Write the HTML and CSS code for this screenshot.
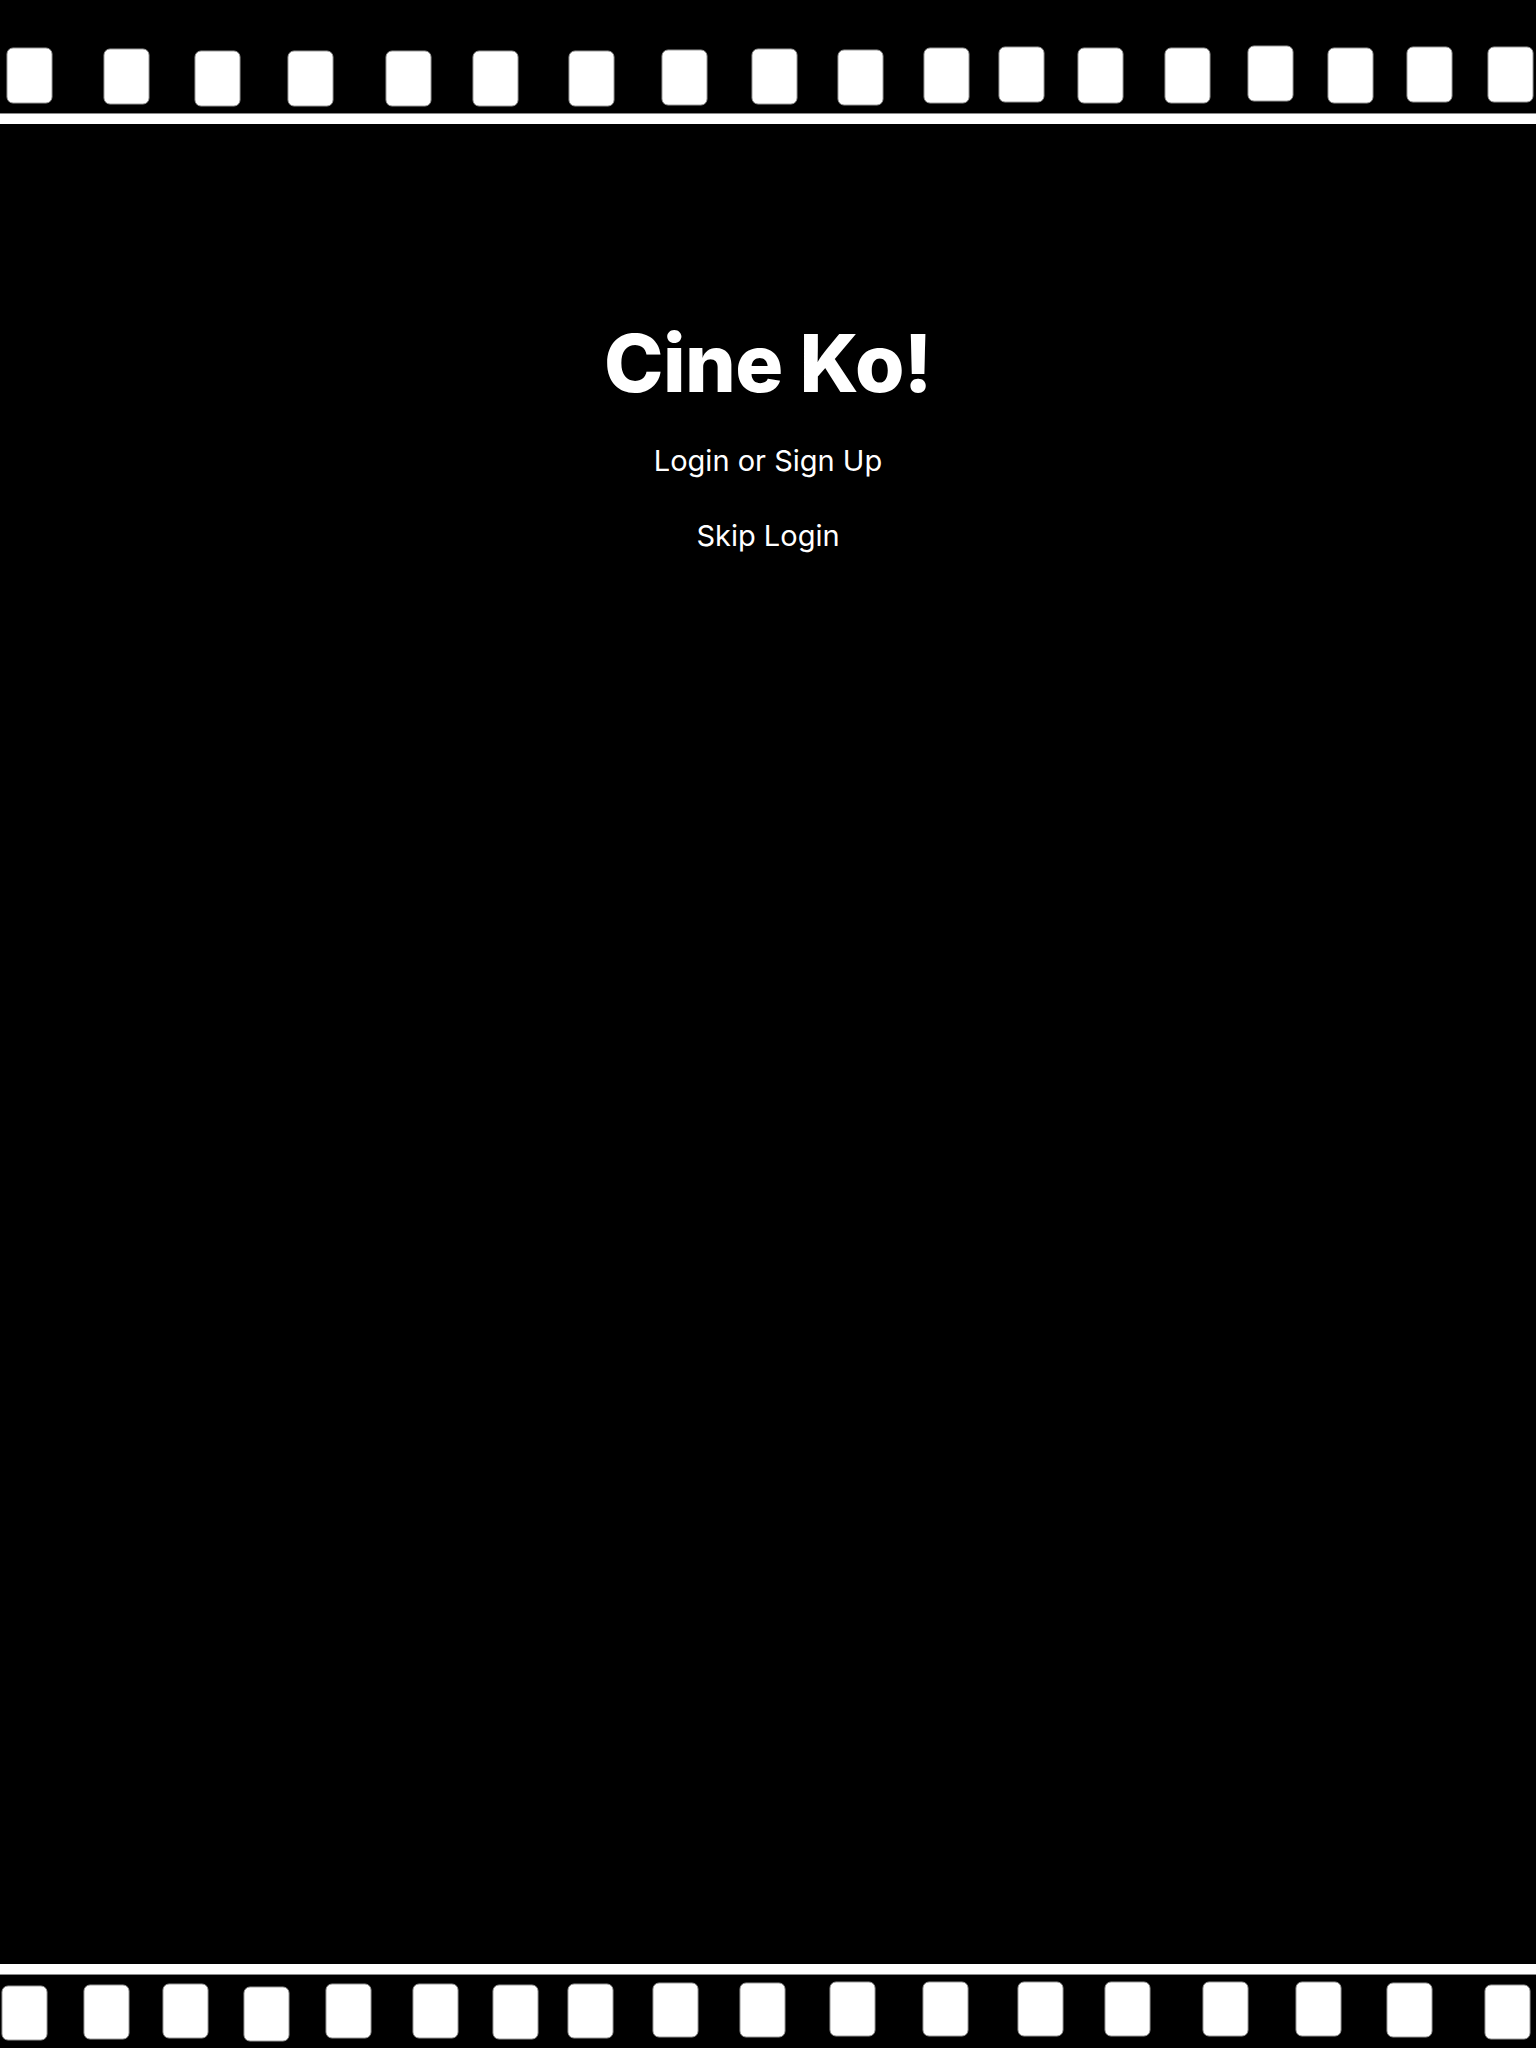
FILE: index.html
```html
<!DOCTYPE html>
<html lang="en">
<head>
<meta charset="utf-8">
<title>Cine Ko!</title>
<link rel="stylesheet" href="styles.css">
</head>
<body>
<div class="page">
  <header class="strip strip-top">
    <svg class="holes" width="1536" height="113" viewBox="0 0 1536 113" aria-hidden="true">
      <g fill="#fff" stroke="#9a9a9a" stroke-width="1">
        <rect x="7" y="48" width="45" height="55" rx="6"/>
        <rect x="104" y="49" width="45" height="55" rx="6"/>
        <rect x="195" y="51" width="45" height="55" rx="6"/>
        <rect x="288" y="51" width="45" height="55" rx="6"/>
        <rect x="386" y="51" width="45" height="55" rx="6"/>
        <rect x="473" y="51" width="45" height="55" rx="6"/>
        <rect x="569" y="51" width="45" height="55" rx="6"/>
        <rect x="662" y="50" width="45" height="55" rx="6"/>
        <rect x="752" y="49" width="45" height="55" rx="6"/>
        <rect x="838" y="50" width="45" height="55" rx="6"/>
        <rect x="924" y="48" width="45" height="55" rx="6"/>
        <rect x="999" y="47" width="45" height="55" rx="6"/>
        <rect x="1078" y="48" width="45" height="55" rx="6"/>
        <rect x="1165" y="48" width="45" height="55" rx="6"/>
        <rect x="1248" y="46" width="45" height="55" rx="6"/>
        <rect x="1328" y="48" width="45" height="55" rx="6"/>
        <rect x="1407" y="47" width="45" height="55" rx="6"/>
        <rect x="1488" y="47" width="45" height="55" rx="6"/>
      </g>
    </svg>
    <div class="band"></div>
  </header>

  <main class="content">
    <h1 class="title">Cine Ko!</h1>
    <a class="link" href="#">Login or Sign Up</a>
    <a class="link" href="#">Skip Login</a>
  </main>

  <footer class="strip strip-bottom">
    <div class="band"></div>
    <svg class="holes" width="1536" height="73" viewBox="0 0 1536 73" aria-hidden="true">
      <g fill="#fff" stroke="#9a9a9a" stroke-width="1">
        <rect x="2" y="11" width="45" height="54" rx="6"/>
        <rect x="84" y="10" width="45" height="54" rx="6"/>
        <rect x="163" y="9" width="45" height="54" rx="6"/>
        <rect x="244" y="12" width="45" height="54" rx="6"/>
        <rect x="326" y="9" width="45" height="54" rx="6"/>
        <rect x="413" y="9" width="45" height="54" rx="6"/>
        <rect x="493" y="10" width="45" height="54" rx="6"/>
        <rect x="568" y="9" width="45" height="54" rx="6"/>
        <rect x="653" y="8" width="45" height="54" rx="6"/>
        <rect x="740" y="8" width="45" height="54" rx="6"/>
        <rect x="830" y="7" width="45" height="54" rx="6"/>
        <rect x="923" y="7" width="45" height="54" rx="6"/>
        <rect x="1018" y="7" width="45" height="54" rx="6"/>
        <rect x="1105" y="7" width="45" height="54" rx="6"/>
        <rect x="1203" y="7" width="45" height="54" rx="6"/>
        <rect x="1296" y="7" width="45" height="54" rx="6"/>
        <rect x="1387" y="8" width="45" height="54" rx="6"/>
        <rect x="1485" y="10" width="45" height="54" rx="6"/>
      </g>
    </svg>
  </footer>
</div>
</body>
</html>
```

FILE: styles.css
```css
* { box-sizing: border-box; }

html, body {
  margin: 0;
  padding: 0;
  background: #000;
}

body {
  font-family: Inter, "Noto Sans", "Liberation Sans", sans-serif;
  color: #fff;
}

.page {
  display: flex;
  flex-direction: column;
  min-height: 2048px;
  width: 1536px;
  overflow: hidden;
}

.strip {
  display: flex;
  flex-direction: column;
  background: #000;
}

.holes {
  display: block;
}

.band {
  height: 11px;
  background: #fff;
  border-top: 1px solid #8a8a8a;
}

.strip-bottom .band {
  border-top: none;
  border-bottom: 1px solid #8a8a8a;
}

.content {
  flex: 1;
  display: flex;
  flex-direction: column;
  align-items: center;
  padding-top: 191px;
}

.title {
  margin: 0;
  font-size: 80px;
  font-weight: 800;
  line-height: 96px;
  letter-spacing: -0.6px;
}

.link {
  color: #fff;
  text-decoration: none;
  font-size: 29px;
  font-weight: 400;
  line-height: 36px;
}

.title + .link {
  margin-top: 32px;
}

.link + .link {
  margin-top: 39px;
}
```
